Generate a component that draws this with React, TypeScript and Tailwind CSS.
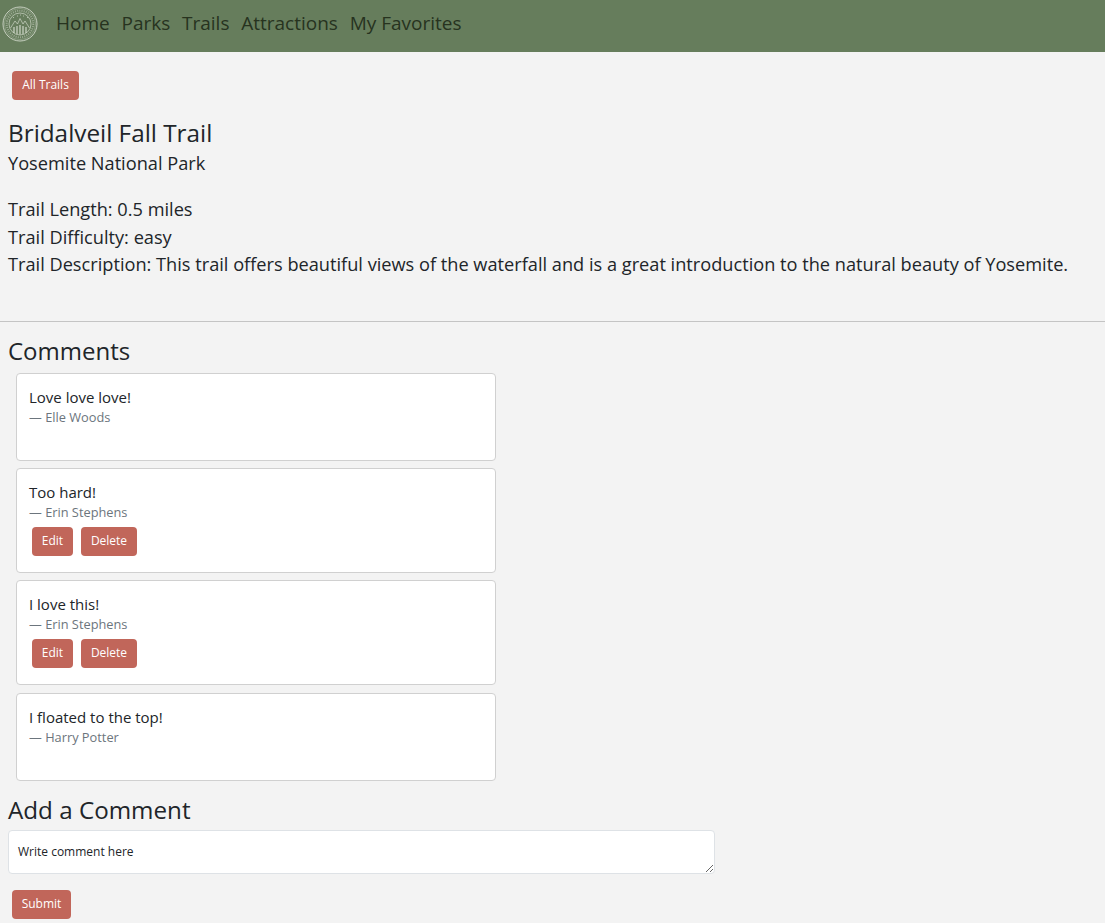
const comments = [
  { id: 1, text: 'Love love love!', author: 'Elle Woods', own: false },
  { id: 2, text: 'Too hard!', author: 'Erin Stephens', own: true },
  { id: 3, text: 'I love this!', author: 'Erin Stephens', own: true },
  { id: 4, text: 'I floated to the top!', author: 'Harry Potter', own: false },
]

const navLinks = ['Home', 'Parks', 'Trails', 'Attractions', 'My Favorites']

function Logo() {
  return (
    <svg width="36" height="36" viewBox="0 0 36 36" fill="none" stroke="#dfe5d9" className="mb-[4px] shrink-0">
      <circle cx="18" cy="18" r="17" strokeWidth="0.8" />
      <circle cx="18" cy="18" r="15.6" strokeWidth="0.4" opacity="0.7" />
      <circle cx="18" cy="18" r="11" strokeWidth="0.6" />
      <circle cx="18" cy="18" r="13.3" strokeWidth="2" strokeDasharray="1 1.2" opacity="0.45" />
      <path d="M8.5 22 L13 15 L15.5 18 L18 12.5 L21 18 L23 15 L27.5 22" strokeWidth="0.7" opacity="0.85" />
      <path d="M12 27 V21 M15 28 V20 M18 28.5 V19 M21 28 V20 M24 27 V21" strokeWidth="1.2" opacity="0.85" />
      <path d="M11 11.5 h.8 M15 10 h.8 M21 10 h.8 M25 11.5 h.8 M18 9 h.8" strokeWidth="0.8" />
    </svg>
  )
}

function RedButton({ label, className }: { label: string; className: string }) {
  return (
    <button className={`h-[29px] rounded-[4px] bg-[#c1665a] pb-[1px] text-[12px] font-medium text-white ${className}`}>
      {label}
    </button>
  )
}

export default function App() {
  return (
    <div className="min-h-screen bg-[#f3f3f3] font-['Open_Sans',sans-serif] text-[#212529]">
      <nav className="flex h-[52px] items-center bg-[#667d5c] pl-[2px]">
        <Logo />
        <div className="mb-[5px] ml-[18px] flex gap-[11.75px] text-[19px] text-[#27331f]">
          {navLinks.map((link) => (
            <a key={link} href="#">{link}</a>
          ))}
        </div>
      </nav>

      <div className="px-[12px] pt-[19px]">
        <RedButton label="All Trails" className="w-[67px]" />
      </div>

      <div className="px-[8px] pt-[17px]">
        <h1 className="text-[24.3px] leading-[32px]">Bridalveil Fall Trail</h1>
        <h2 className="text-[18.2px] leading-[29px]">Yosemite National Park</h2>
        <div className="mt-[18px] text-[18.2px] leading-[27.5px]">
          <p>Trail Length: 0.5 miles</p>
          <p>Trail Difficulty: easy</p>
          <p>Trail Description: This trail offers beautiful views of the waterfall and is a great introduction to the natural beauty of Yosemite.</p>
        </div>
      </div>

      <hr className="mt-[42px] border-[#c4c4c4]" />

      <div className="px-[8px] pt-[14px]">
        <h2 className="text-[24px] leading-[30px]">Comments</h2>
        <div className="mt-[7px] ml-[8px] flex w-[480px] flex-col gap-[7.7px]">
          {comments.map((c) => (
            <div key={c.id} className="rounded-[4px] border border-[#d0d0d0] bg-white pl-[12px] pt-[13px]">
              <p className="text-[15px] leading-[20px] text-[#212529]">{c.text}</p>
              <p className="text-[12.8px] leading-[20px] text-[#6c757d]">— {c.author}</p>
              {c.own ? (
                <div className="mt-[5px] mb-[15.5px] ml-[3px] flex gap-[8px]">
                  <RedButton label="Edit" className="w-[41px]" />
                  <RedButton label="Delete" className="w-[56px]" />
                </div>
              ) : (
                <div className="h-[33px]" />
              )}
            </div>
          ))}
        </div>

        <h2 className="mt-[14px] text-[24.2px] leading-[30px]">Add a Comment</h2>
        <textarea
          className="mt-[5px] block h-[44px] w-[707px] rounded-[4px] border border-[#dee2e6] bg-white px-[9px] py-[12px] text-[12px] leading-[18px] placeholder:text-[#212529]"
          placeholder="Write comment here"
        />
        <div className="pt-[16px] pl-[4px]">
          <RedButton label="Submit" className="w-[59px]" />
        </div>
      </div>
    </div>
  )
}
